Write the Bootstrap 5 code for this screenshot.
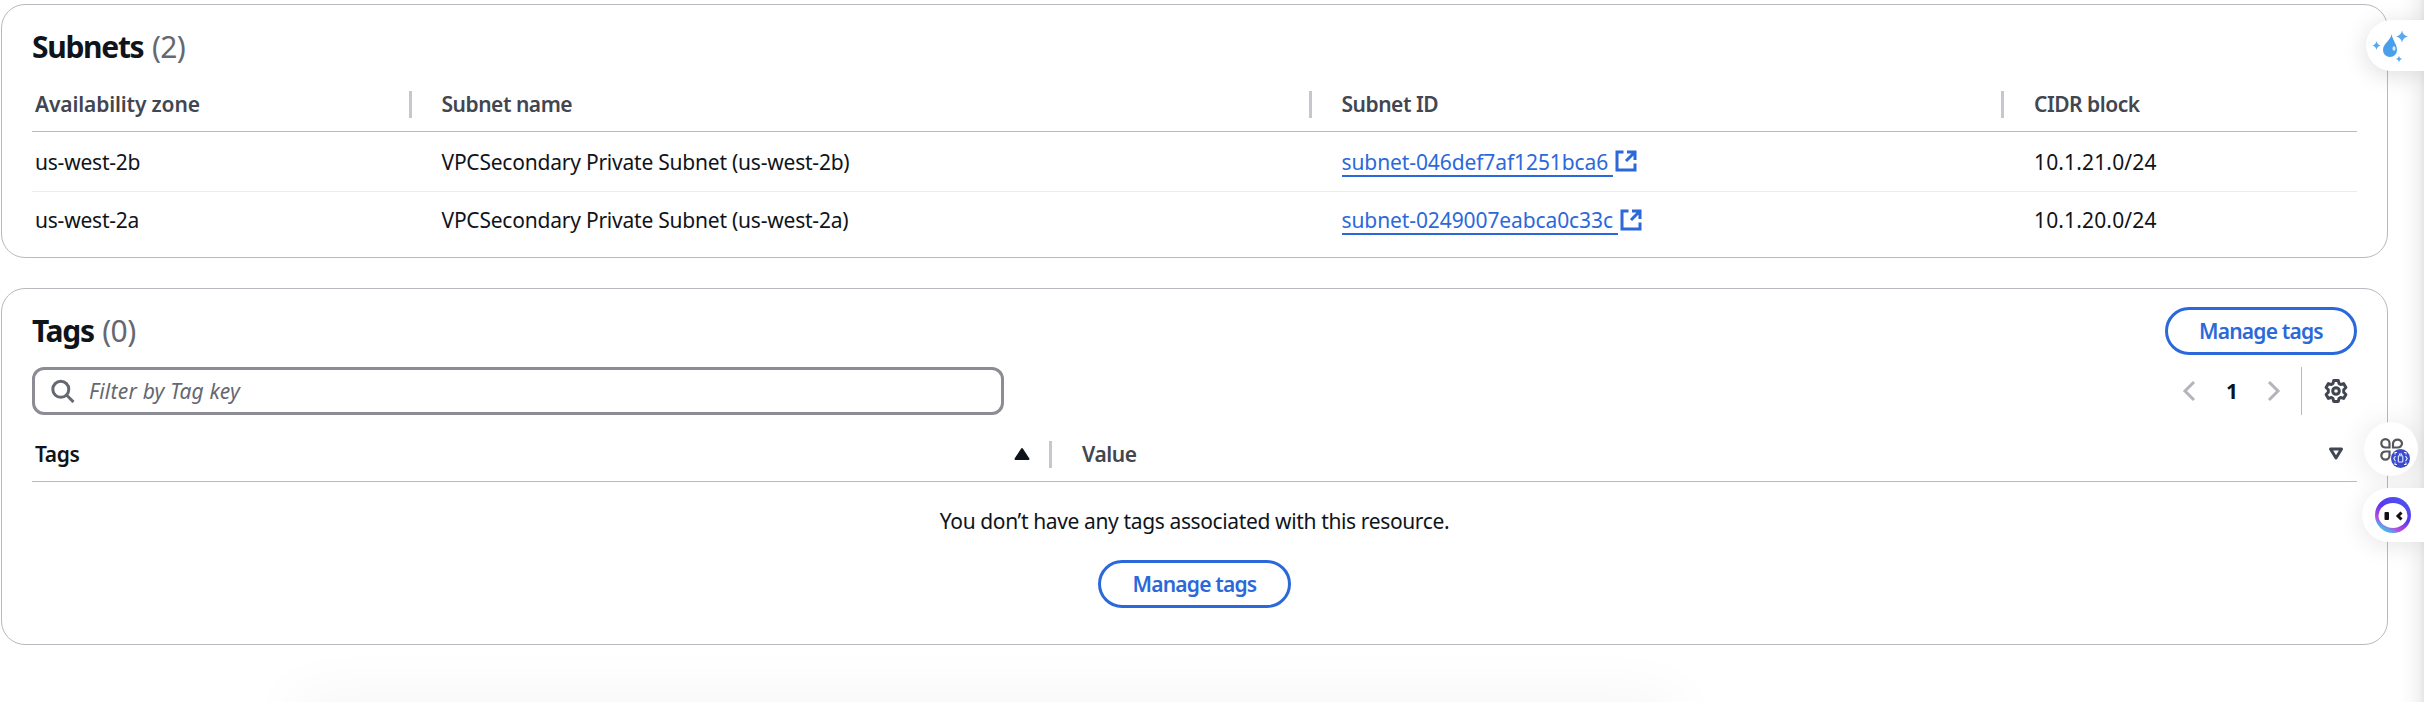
<!DOCTYPE html>
<html lang="en">
<head>
<meta charset="utf-8">
<meta name="viewport" content="width=device-width, initial-scale=1">
<title>Subnets and tags</title>
<link href="https://cdn.jsdelivr.net/npm/bootstrap@5.3.0/dist/css/bootstrap.min.css" rel="stylesheet">
<style>
  html { overflow: hidden; }
  body { font-family: "Noto Sans", sans-serif; font-size: 21px; line-height: 30px; color: #0f141a; background: #fff; height: 702px; overflow: hidden; position: relative; }
  .page { width: 2388px; padding: 4px 0 0 1px; }
  .panel { border: 1px solid #b9b9c0; border-radius: 24px; background: #fff; padding: 0 30px; }
  .panel-subnets { height: 254px; padding-top: 24px; margin-bottom: 30px; }
  .panel-tags { height: 357px; padding-top: 18px; }
  .panel-title { font-size: 30px; line-height: 36px; font-weight: 700; letter-spacing: -1.3px; margin: 0; }
  .panel-title .count { font-weight: 450; color: #656871; letter-spacing: -.6px; margin-left: 2px; }
  .grid-table { table-layout: fixed; border-collapse: separate; border-spacing: 0; width: 2325px; margin-top: 12px; }
  .grid-table th, .grid-table td { padding: 0; vertical-align: middle; white-space: nowrap; font-weight: 450; letter-spacing: -.22px; }
  .grid-table th { height: 55px; border-bottom: 1px solid #b9b9c0; color: #424650; font-weight: 650; letter-spacing: -.48px; }
  .grid-table th:first-child { letter-spacing: -.15px; }
  .grid-table th:first-child, .grid-table td:first-child { padding-left: 3px; }
  .grid-table td { height: 60px; border-bottom: 1px solid #ebebf0; }
  .grid-table tbody tr:last-child td { height: 56px; border-bottom: 0; }
  .grid-table td + td { padding-left: 33px; }
  .grid-table td.cidr { letter-spacing: .15px; }
  .split { width: 3px; height: 27px; background: #c6c6cd; margin-right: 30px; }
  .link-out { color: #2b69da; letter-spacing: -.1px; text-decoration: none; }
  .link-out span { border-bottom: 2px solid #2b69da; padding-right: 5px; line-height: 27px; display: inline-block; height: 28px; margin-top: 2px; }
  .link-out svg { margin-left: 2px; margin-bottom: 1px; }
  .btn-pill { height: 48px; border: 3px solid #2b69da; border-radius: 24px; color: #2b69da; font-size: 21px; font-weight: 650; line-height: 40px; letter-spacing: -.8px; padding: 0; background: #fff; }
  .filter { width: 972px; height: 48px; border: 3px solid #8c8c94; border-radius: 12px; padding-left: 16px; }
  .filter .hint { color: #656871; font-style: italic; letter-spacing: .22px; margin-left: 14px; }
  .rule { width: 1px; height: 48px; background: #b9b9c0; }
  .tags-head { height: 55px; border-bottom: 1px solid #b9b9c0; font-weight: 650; letter-spacing: -.4px; margin-top: 12px; }
  .empty { letter-spacing: -.37px; font-weight: 450; }
  /* widgets floating over the page's right edge */
  .edge { position: absolute; right: 0; top: 0; width: 24px; height: 702px; background: linear-gradient(to right, rgba(0,0,0,0), rgba(0,0,0,.015) 40%, rgba(0,0,0,.05) 80%, rgba(0,0,0,.1)); }
  .floater { position: absolute; background: #fff; box-shadow: 0 4px 24px rgba(0,0,0,.14); }
  .floater svg { display: block; }
  .float-drop { right: 0; top: 20px; width: 58px; height: 51px; border-radius: 26px 0 0 26px; }
  .float-apps { right: 6px; top: 422px; width: 54px; height: 54px; border-radius: 50%; box-shadow: 0 2px 30px rgba(0,0,0,.1); }
  .float-bot { right: 0; top: 488px; width: 62px; height: 54px; border-radius: 27px 0 0 27px; box-shadow: 0 4px 24px rgba(0,0,0,.1); }
  .dock-shade { position: absolute; left: 320px; bottom: -1px; width: 1330px; height: 1px; box-shadow: 0 20px 60px 26px rgba(0,0,0,.045); }
</style>
</head>
<body>
<main class="page">
  <section class="panel panel-subnets">
    <h2 class="panel-title">Subnets <span class="count">(2)</span></h2>
    <table class="grid-table">
      <colgroup><col style="width:376.5px"><col style="width:900px"><col style="width:692.5px"><col></colgroup>
      <thead>
        <tr>
          <th>Availability zone</th>
          <th><div class="d-flex align-items-center"><i class="split"></i>Subnet name</div></th>
          <th><div class="d-flex align-items-center"><i class="split"></i>Subnet ID</div></th>
          <th><div class="d-flex align-items-center"><i class="split"></i>CIDR block</div></th>
        </tr>
      </thead>
      <tbody>
        <tr>
          <td>us-west-2b</td>
          <td>VPCSecondary Private Subnet (us-west-2b)</td>
          <td><a href="#" class="link-out d-flex align-items-center"><span>subnet-046def7af1251bca6</span><svg width="22" height="22" viewBox="0 0 22 22" fill="none" stroke="#2b69da" stroke-width="3"><path d="M8.500 2H2v18h18v-6.500M12 2h8v8M20 2L11 11"/></svg></a></td>
          <td class="cidr">10.1.21.0/24</td>
        </tr>
        <tr>
          <td>us-west-2a</td>
          <td>VPCSecondary Private Subnet (us-west-2a)</td>
          <td><a href="#" class="link-out d-flex align-items-center"><span>subnet-0249007eabca0c33c</span><svg width="22" height="22" viewBox="0 0 22 22" fill="none" stroke="#2b69da" stroke-width="3"><path d="M8.500 2H2v18h18v-6.500M12 2h8v8M20 2L11 11"/></svg></a></td>
          <td class="cidr">10.1.20.0/24</td>
        </tr>
      </tbody>
    </table>
  </section>

  <section class="panel panel-tags">
    <div class="d-flex justify-content-between align-items-center">
      <h2 class="panel-title">Tags <span class="count">(0)</span></h2>
      <button class="btn btn-pill" type="button" style="width:192px">Manage tags</button>
    </div>
    <div class="d-flex justify-content-between align-items-center" style="margin-top:12px">
      <div class="filter d-flex align-items-center">
        <svg width="24" height="24" viewBox="0 0 24 24" fill="none" stroke="#656871" stroke-width="3"><circle cx="9.800" cy="10.300" r="8"/><path d="M15.500 16l7 7"/></svg>
        <span class="hint">Filter by Tag key</span>
      </div>
      <div class="d-flex align-items-center">
        <svg width="14" height="22" viewBox="0 0 14 22" fill="none" stroke="#b4b4bb" stroke-width="3"><path d="M12 2L3 11l9 9"/></svg>
        <b style="margin:0 29px 0 30px;width:12px;font-weight:700">1</b>
        <svg width="14" height="22" viewBox="0 0 14 22" fill="none" stroke="#b4b4bb" stroke-width="3"><path d="M2 2l9 9-9 9"/></svg>
        <i class="rule" style="margin:0 21px 0 20px"></i>
        <svg style="margin-right:8px" width="26" height="26" viewBox="0 0 26 26" fill="none" stroke="#424650" stroke-width="3" stroke-linejoin="round"><path d="M10.700 2.500h4.600l.7 3 1.600 1 3-.9 2.300 3.900-2.200 2.200v2.600l2.200 2.200-2.300 3.900-3-.9-1.600 1-.7 3h-4.600l-.7-3-1.600-1-3 .9-2.300-3.900 2.200-2.200v-2.600L3.100 9.500l2.300-3.900 3 .9 1.600-1z"/><circle cx="13" cy="13" r="3.300"/></svg>
      </div>
    </div>
    <div class="tags-head d-flex align-items-center">
      <span style="margin-left:3px;width:979px">Tags</span>
      <svg width="16" height="14" viewBox="0 0 16 14" fill="#0f141a" stroke="#0f141a" stroke-width="2" stroke-linejoin="round"><path d="M8 2l6.500 10h-13z"/></svg>
      <i class="split" style="margin-left:19px"></i>
      <span class="flex-grow-1" style="color:#424650">Value</span>
      <svg style="margin-right:13px" width="16" height="14" viewBox="0 0 16 14" fill="none" stroke="#424650" stroke-width="3" stroke-linejoin="round"><path d="M2.500 2h11L8 11z"/></svg>
    </div>
    <div class="empty d-flex flex-column align-items-center" style="padding-top:24px">
      <div>You don’t have any tags associated with this resource.</div>
      <button class="btn btn-pill" type="button" style="width:193px;margin-top:24px">Manage tags</button>
    </div>
  </section>
</main>

<div class="edge"></div>
<div class="dock-shade"></div>
<div class="floater float-drop">
  <svg width="58" height="51" viewBox="0 0 58 51"><path d="M25.500 14c0 6-8.500 9-8.500 16a7 7 0 0 0 14 0c0-6-4-9-5.500-16z" fill="#4b9eea"/><ellipse cx="28" cy="28.500" rx="1.500" ry="2.300" fill="#d5ebff"/><path d="M36 10.500q1 5 6 6-5 1-6 6-1-5-6-6 5-1 6-6zM10.500 21q.8 3.600 4.300 4.500-3.500.9-4.300 4.500-.8-3.600-4.300-4.500 3.500-.9 4.300-4.500zM33 36q.6 2.400 3 3-2.400.6-3 3-.6-2.400-3-3 2.400-.6 3-3z" fill="#58aaf0"/></svg>
</div>
<div class="floater float-apps">
  <svg width="54" height="54" viewBox="0 0 54 54"><g fill="none" stroke="#55565c" stroke-width="2.200"><path d="M25.500 25.500H21a4.300 4.300 0 0 1-3.700-4.200 4.100 4.100 0 0 1 8.200 0zM29 25.500v-4.200a4.600 4.600 0 0 1 9 0 4.200 4.200 0 0 1-4.500 4.200zM25.500 29.500v4a4.100 4.100 0 0 1-8.200 0 4.200 4.200 0 0 1 3.700-4z"/></g><circle cx="36.500" cy="36.500" r="9.500" fill="#3b4bce"/><g fill="none" stroke="#e6ebff" stroke-width="1.100"><rect x="34.300" y="33.800" width="4.500" height="6.200" rx=".8"/><path d="M35.500 33v-1h2v1M31.500 34l-1.700 2.600 1.700 2.600M41.500 34l1.700 2.600-1.700 2.600M31 32.500V30.500h2M42 32.500V30.500h-2M31 40.500v2h2M42 40.500v2h-2"/></g></svg>
</div>
<div class="floater float-bot">
  <svg width="62" height="54" viewBox="0 0 62 54"><defs><linearGradient id="ring" x1=".1" y1="1" x2=".7" y2="0"><stop offset="0" stop-color="#9a55d8"/><stop offset=".15" stop-color="#46b7ec"/><stop offset=".3" stop-color="#b64be0"/><stop offset=".6" stop-color="#5b35ee"/><stop offset="1" stop-color="#4b55ee"/></linearGradient></defs><circle cx="31" cy="27" r="18" fill="url(#ring)"/><ellipse cx="31" cy="27.500" rx="14.500" ry="12.500" fill="#fff"/><rect x="22.500" y="24" width="4.500" height="8" rx="1" fill="#111"/><path d="M39.500 24.500L36 28l3.500 3.500" fill="none" stroke="#111" stroke-width="3"/></svg>
</div>
<script src="https://cdn.jsdelivr.net/npm/bootstrap@5.3.0/dist/js/bootstrap.bundle.min.js"></script>
</body>
</html>
